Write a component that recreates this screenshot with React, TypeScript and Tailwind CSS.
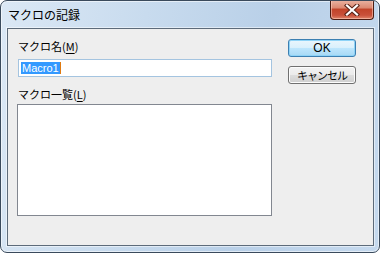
import React from "react";

const jp = "font-['Noto_Sans_CJK_JP','Liberation_Sans',sans-serif]";

function CloseButton() {
  return (
    <div className="mt-[-1px] mr-[5px] h-[20px] w-[44px] rounded-b-[4px] border border-t-0 border-[#4a1c12] bg-[linear-gradient(to_bottom,#eab4a4_0%,#dc8a73_40%,#c2442a_50%,#c9513a_80%,#e0856a_100%)] shadow-[inset_0_0_0_1px_rgba(255,210,195,0.55)] flex items-center justify-center">
      <svg width="16" height="12" viewBox="0 0 16 12">
        <path d="M3 1.5 L13 10.5 M13 1.5 L3 10.5" stroke="#5a2418" strokeWidth="4.2" strokeLinecap="square" />
        <path d="M3 1.5 L13 10.5 M13 1.5 L3 10.5" stroke="#ffffff" strokeWidth="2.2" strokeLinecap="square" />
      </svg>
    </div>
  );
}

function Btn({ children, focused, font }: { children: React.ReactNode; focused?: boolean; font: string }) {
  return (
    <div
      className={
        "h-[18px] w-[68px] rounded-[3px] border flex items-center justify-center leading-none text-black font-normal " +
        font +
        " " +
        (focused
          ? "border-[#3c7fb1] bg-[linear-gradient(to_bottom,#eaf6fd_0%,#d9f0fc_50%,#bee6fd_50%,#a7d9f5_100%)] shadow-[inset_0_0_0_1px_#8ed3f7]"
          : "border-[#707070] bg-[linear-gradient(to_bottom,#f2f2f2_0%,#ebebeb_50%,#dddddd_50%,#cfcfcf_100%)] shadow-[inset_0_0_0_1px_#fcfcfc]")
      }
    >
      {children}
    </div>
  );
}

export default function App() {
  return (
    <div className="w-[380px] h-[253px] rounded-[7px] border border-[#3a4a5c] bg-[linear-gradient(100deg,#dbe8f5_0%,#c8dbee_35%,#b9d0e8_65%,#c5d9ee_100%)] shadow-[inset_0_0_0_1px_rgba(255,255,255,0.55)] flex flex-col overflow-hidden">
      <div className="h-[27px] flex items-start justify-between">
        <div className={"pl-[7px] pt-[6px] text-[12px] leading-[16px] text-black " + jp}>マクロの記録</div>
        <CloseButton />
      </div>
      <div className="ml-[6px] mr-[5px] h-[218px] border border-[#5d6b7a] bg-[#eeeeee] flex shadow-[0_0_0_1px_rgba(255,255,255,0.5)]">
        <div className="pl-[10px] pt-[10px] w-[274px] flex flex-col">
          <div className={"h-[14px] text-[11px] leading-[14px] text-black " + jp}>
            マクロ名(<span className="underline underline-offset-2">M</span>)
          </div>
          <div className="mt-[6px] h-[18px] w-[254px] border border-[#a4c4e0] bg-white flex items-center pl-[2px]">
            <span className="h-[12px] bg-[#3399ff] text-white text-[11px] leading-[12px] font-['Liberation_Sans',sans-serif] px-[1px]">
              Macro1
            </span>
            <span className="h-[12px] w-[1px] bg-[#e07a10]" />
          </div>
          <div className={"mt-[10px] h-[14px] text-[11px] leading-[14px] text-black " + jp}>
            マクロ一覧(<span className="underline underline-offset-2">L</span>)
          </div>
          <div className="mt-[3px] ml-[-1px] h-[112px] w-[255px] border border-[#828790] bg-white" />
        </div>
        <div className="ml-[6px] pt-[10px] flex flex-col gap-[9px]">
          <Btn focused font="font-['Liberation_Sans',sans-serif] text-[12px]">OK</Btn>
          <Btn font={jp + " text-[11px] tracking-[-1px]"}>キャンセル</Btn>
        </div>
      </div>
    </div>
  );
}
